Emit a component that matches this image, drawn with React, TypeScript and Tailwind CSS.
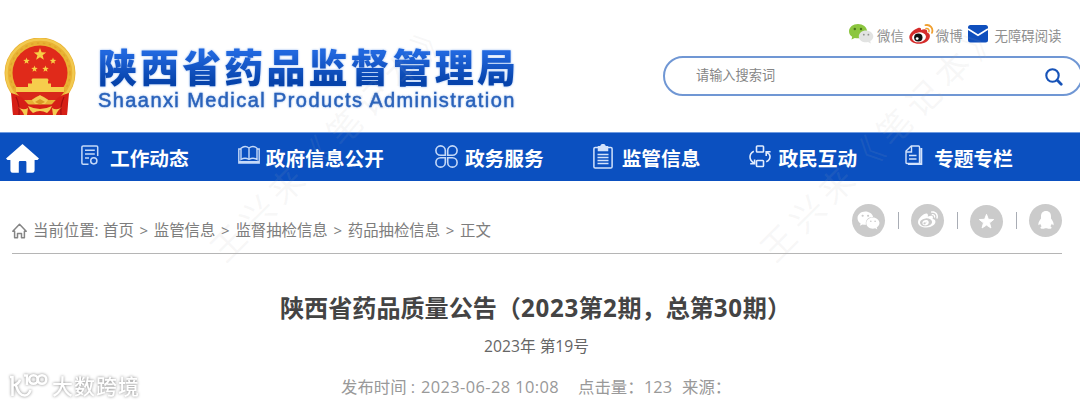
import type { ReactNode } from 'react'
import { FaWeixin, FaWeibo } from 'react-icons/fa'

interface NavItem {
  label: string
  className: string
  labelClass: string
  icon: ReactNode
}

const star = (cx: number, cy: number, r: number) =>
  Array.from({ length: 10 }, (_, i) => {
    const a = (Math.PI / 5) * i - Math.PI / 2
    const d = i % 2 ? r * 0.42 : r
    return `${(cx + d * Math.cos(a)).toFixed(2)},${(cy + d * Math.sin(a)).toFixed(2)}`
  }).join(' ')

// 国徽
function Emblem() {
  return (
    <svg className="w-[72px] h-[78px] shrink-0" viewBox="0 0 72 78">
      <path d="M8 52 L64 52 L63 77 H9 Z" fill="#d61f16" />
      <circle cx="36" cy="35" r="35.5" fill="#e9b233" />
      <circle cx="36" cy="35" r="33.5" fill="none" stroke="#f2c94f" strokeWidth="2.5" />
      <circle cx="36" cy="35" r="30" fill="none" stroke="#e0a42c" strokeWidth="1.5" strokeDasharray="2.5 3.5" />
      <circle cx="36" cy="35" r="27.5" fill="#e02a1a" />
      <polygon points={star(36, 16.5, 6.5)} fill="#f7cf45" />
      <polygon points={star(22.5, 23, 3.4)} fill="#f7cf45" />
      <polygon points={star(49, 23, 3.4)} fill="#f7cf45" />
      <polygon points={star(30.5, 31, 3.4)} fill="#f7cf45" />
      <polygon points={star(41.5, 31, 3.4)} fill="#f7cf45" />
      <path d="M27 42.5 L28.5 40.5 H43.5 L45 42.5 H44 V45.5 H47 V49 H60 V54 H12 V49 H24 V45.5 H28 V42.5 Z" fill="#f6cd4c" />
      <path d="M12 54 H60 Q57 59 53 62 H19 Q15 59 12 54 Z" fill="#d8281a" />
      <path d="M14 60 Q24 66 29 61 Q36 55 43 61 Q48 66 58 60 L50 70 H22 Z" fill="#e8b035" />
      <path d="M7 55 Q17 57 23 65 Q28 69 27 77 H9 Z M65 55 Q55 57 49 65 Q44 69 45 77 H63 Z" fill="#d61f16" />
      <path d="M12 59 Q16 67 15 77 M60 59 Q56 67 57 77" stroke="#a50f10" strokeWidth="1.2" fill="none" />
      <path d="M24 66.5 H48 Q46 73 42 77 H30 Q26 73 24 66.5 Z" fill="#d61f16" />
      <path d="M28 62 L36 57 L44 62 L41 66 H31 Z M24 68 Q36 74 48 68 L46 72 L43 75 Q36 71 29 75 L26 72 Z" fill="#f4cc52" />
      <path d="M31 64 L36 61 L41 64 L36 66.5 Z" fill="#d99a25" />
      <path d="M14 69 Q19 73 24 70 L23 77 H20 Q19 73 14 69 Z M58 69 Q53 73 48 70 L49 77 H52 Q53 73 58 69 Z" fill="#f4cc52" />
    </svg>
  )
}

function WechatIcon() {
  return (
    <svg className="w-[25px] h-5" viewBox="0 0 25 20">
      <path d="M9 0 C4 0 0 3.2 0 7.2 C0 9.5 1.2 11.4 3.2 12.7 L2.5 15.5 L5.8 13.9 C12 15.5 18.2 12 18 7 C17.8 3 14 0 9 0 Z" fill="#8cc63f" />
      <circle cx="5.8" cy="5" r="1.2" fill="#47731a" />
      <circle cx="12" cy="5" r="1.2" fill="#47731a" />
      <path d="M17 6.5 C12.8 6.5 9.8 9.2 9.8 12.4 C9.8 16.5 14.4 19 19 18 L21.8 19.4 L21.2 17 C23.2 15.8 24.3 14.2 24.3 12.4 C24.3 9.2 21 6.5 17 6.5 Z" fill="#e2e3e2" />
      <circle cx="14.8" cy="10.7" r="0.9" fill="#8e918c" />
      <circle cx="19.4" cy="10.7" r="0.9" fill="#8e918c" />
    </svg>
  )
}

function WeiboIcon() {
  return (
    <svg className="w-[25px] h-5" viewBox="0 0 25 20">
      <path d="M9 4 C11 3.2 12.4 4 12 6 C15 4.7 19 4.8 18.2 8.4 C20.5 9.2 21.2 10.8 20.8 13 C20 17.2 15.5 19.8 10 19.8 C4.5 19.8 .3 17 .3 13.2 C.3 9.5 5 5.5 9 4 Z" fill="#d52b2a" />
      <ellipse cx="10" cy="13.3" rx="7" ry="4.9" fill="#fff" transform="rotate(-8 10 13.3)" />
      <ellipse cx="9.3" cy="13.5" rx="4.2" ry="3.9" fill="#111" />
      <circle cx="8.2" cy="14.6" r="1.4" fill="#fff" />
      <path d="M16.5 1.2 C21 .2 24.6 4 23 8.8" stroke="#f0a030" strokeWidth="1.8" fill="none" strokeLinecap="round" />
      <path d="M17 4.6 C19.2 4.2 20.6 5.8 19.9 7.8" stroke="#f0a030" strokeWidth="1.5" fill="none" strokeLinecap="round" />
    </svg>
  )
}

function MailIcon() {
  return (
    <svg className="w-5 h-[18px]" viewBox="0 0 20 18">
      <rect width="20" height="17.5" rx="2.5" fill="#0f4fbd" />
      <path d="M0 4 L10 10.3 L20 4" stroke="#fff" strokeWidth="1.7" fill="none" />
    </svg>
  )
}

const navItems: NavItem[] = [
  {
    label: '工作动态',
    className: 'ml-[42px]',
    labelClass: 'ml-[11px]',
    icon: (
      <svg className="mb-1 w-[18px] h-[21px]" viewBox="0 0 18 21" fill="none" stroke="#c5d9f8" strokeWidth="1.5">
        <path d="M7.5 19.2 H2.2 Q.9 19.2 .9 18 V2 Q.9 .9 2.2 .9 H15.5 Q16.7 .9 16.7 2 V11" />
        <path d="M4 5.2 H13.8 M4 9 H13.8 M4 13 H8" />
        <circle cx="12.8" cy="15.8" r="3.1" />
      </svg>
    ),
  },
  {
    label: '政府信息公开',
    className: 'ml-[49px]',
    labelClass: 'ml-[6px]',
    icon: (
      <svg className="mb-1 w-[22px] h-[21px]" viewBox="0 0 22 21" fill="none" stroke="#c5d9f8" strokeWidth="1.4">
        <path d="M3 14.5 V3.2 Q7 -.2 11 3 Q15 -.2 19 3.2 V14.5 Q15 12 11 14.5 Q7 12 3 14.5 Z M11 3 V14.5" />
        <path d="M3 4 H.8 V18 H21.2 V4 H19 M1 16.6 H21" />
      </svg>
    ),
  },
  {
    label: '政务服务',
    className: 'ml-[51px]',
    labelClass: 'ml-[7px]',
    icon: (
      <svg className="mb-0.5 w-[23px] h-[23px]" viewBox="0 0 23 23" fill="none" stroke="#c5d9f8" strokeWidth="1.6">
        <path d="M10.3 10.3 H5.6 A4.7 4.7 0 1 1 10.3 5.6 Z M12.7 10.3 V5.6 A4.7 4.7 0 1 1 17.4 10.3 Z M10.3 12.7 V17.4 A4.7 4.7 0 1 1 5.6 12.7 Z M12.7 12.7 H17.4 A4.7 4.7 0 1 1 12.7 17.4 Z" />
      </svg>
    ),
  },
  {
    label: '监管信息',
    className: 'ml-[49px]',
    labelClass: 'ml-[9px]',
    icon: (
      <svg className="mb-0.5 w-5 h-[25px]" viewBox="0 0 20 25" fill="none" stroke="#d3e2fb" strokeWidth="1.5">
        <path d="M5 3.5 H2.2 Q.9 3.5 .9 4.8 V22.8 Q.9 24.1 2.2 24.1 H17.8 Q19.1 24.1 19.1 22.8 V4.8 Q19.1 3.5 17.8 3.5 H15" />
        <path d="M5.5 6.5 V2.8 H7.8 Q8 .6 10 .6 Q12 .6 12.2 2.8 H14.5 V6.5 Z" fill="#d3e2fb" />
        <path d="M4.5 10.5 H15.5 M4.5 13.5 H15.5 M4.5 16.5 H15.5 M4.5 19.5 H15.5" strokeWidth="1.3" />
      </svg>
    ),
  },
  {
    label: '政民互动',
    className: 'ml-[49px]',
    labelClass: 'ml-[7px]',
    icon: (
      <svg className="mb-0.5 w-[22px] h-[23px]" viewBox="0 0 22 23" fill="none" stroke="#e2ecfd" strokeWidth="1.6">
        <rect x="7.5" y="1" width="7" height="6" rx=".8" />
        <rect x="7.5" y="15.5" width="7" height="6" rx=".8" />
        <path d="M4.8 6.2 Q1 8 1 12 Q1 15.5 5.2 18.3 M1.2 18.8 H5.6 V14.6" />
        <path d="M17.2 16.8 Q21 15 21 11.4 Q21 9 17.6 7.4 M21.6 6.8 H17.2 V11" />
      </svg>
    ),
  },
  {
    label: '专题专栏',
    className: 'ml-[48px]',
    labelClass: 'ml-[11px]',
    icon: (
      <svg className="mb-1 w-[18px] h-5" viewBox="0 0 18 20" fill="none" stroke="#d3e2fb" strokeWidth="1.4">
        <path d="M1 17.5 V6 L6.3 1 H13.5 Q14.5 1 14.5 2 V17.5 Q14.5 18.5 13.5 18.5 H2 Q1 18.5 1 17.5 Z" />
        <path d="M1 7 H6.5 V1 M4 10.5 H11.5 M4 14 H11.5" />
        <path d="M16.3 3 V19 H3" strokeWidth="2" />
      </svg>
    ),
  },
]

const crumbs = ['首页', '监管信息', '监督抽检信息', '药品抽检信息', '正文']

function ShareDot({ className, children }: { className: string; children: ReactNode }) {
  return (
    <span className={`flex size-[33px] items-center justify-center rounded-full bg-[#cbcbcb] text-white ${className}`}>
      {children}
    </span>
  )
}

function Divider({ className }: { className: string }) {
  return <span className={`h-[17px] w-px bg-[#a9adb5] ${className}`} />
}

export default function App() {
  return (
    <div className="relative h-[406px] w-[1080px] overflow-hidden bg-white font-['Open_Sans','Noto_Sans_CJK_SC',sans-serif]">
      {/* 页头 */}
      <header className="flex h-[132px]">
        <div className="flex pt-[38px] pl-1">
          <Emblem />
          <div className="ml-[22px] pt-[5px]">
            <div className="h-[46px] bg-linear-to-b from-[#2168df] from-20% to-[#0643ab] to-85% bg-clip-text font-['Noto_Sans_CJK_SC',sans-serif] text-[39px] leading-[44px] font-black tracking-[3.1px] whitespace-nowrap text-transparent drop-shadow-[0_0_1px_#8fb5f0]">
              陕西省药品监督管理局
            </div>
            <div className="font-['Liberation_Sans',sans-serif] text-[20px] leading-[22px] tracking-[1.42px] whitespace-nowrap text-[#2a62ba] [-webkit-text-stroke:0.45px_#2a62ba] drop-shadow-[0_0_1px_#9fbfee]">
              Shaanxi Medical Products Administration
            </div>
          </div>
        </div>
        <div className="ml-auto w-[417px] shrink-0 pt-6">
          <div className="flex h-5 items-center pl-[186px] text-[13.4px] whitespace-nowrap text-[#8f8f8f]">
            <WechatIcon />
            <span className="mt-1 ml-[3px]">微信</span>
            <span className="ml-[5px]"><WeiboIcon /></span>
            <span className="mt-1 ml-[2px]">微博</span>
            <span className="ml-[5px]"><MailIcon /></span>
            <span className="mt-1 ml-[7px]">无障碍阅读</span>
          </div>
          <div className="mt-3 flex h-10 w-[420px] items-center rounded-full border-2 border-[#7097d4] pl-[31px]">
            <span className="text-[13.2px] text-[#858585]">请输入搜索词</span>
            <svg className="mt-0.5 ml-[270px] size-[18px]" viewBox="0 0 18 18" fill="none" stroke="#1753b8" strokeLinecap="round">
              <circle cx="7.5" cy="7.5" r="6.2" strokeWidth="2.1" />
              <path d="M12.3 12.3 L16.2 16.2" strokeWidth="2.8" />
            </svg>
          </div>
        </div>
      </header>

      {/* 主导航 */}
      <nav className="flex h-[49px] items-center border-t border-[#6f9be0] bg-[#0b50c0] text-white">
        <svg className="mt-0.5 ml-[6px] w-[33px] h-[29px]" viewBox="0 0 33 29" fill="#fff">
          <path d="M16.5 0 L33 14.5 L31.5 16 H28.6 V26.5 Q28.6 28.7 26.4 28.7 H20.4 V18.2 Q20.4 17 19.2 17 H14 Q12.8 17 12.8 18.2 V28.7 H6.6 Q4.4 28.7 4.4 26.5 V16 H1.5 L0 14.5 Z" />
        </svg>
        {navItems.map(item => (
          <a key={item.label} className={`flex items-center whitespace-nowrap ${item.className}`}>
            {item.icon}
            <span className={`mt-1 text-[19.7px] leading-6 font-bold ${item.labelClass}`}>{item.label}</span>
          </a>
        ))}
      </nav>

      {/* 当前位置 */}
      <div className="mx-3 flex h-[73px] w-[1050px] border-b border-[#b5b5b5]">
        <div className="flex items-center pt-[27px] text-[15.4px] whitespace-nowrap text-[#7d7d7d]">
          <svg className="w-[15px] h-4" viewBox="0 0 15 16" fill="none" stroke="#858585" strokeWidth="1.5" strokeLinejoin="round">
            <path d="M.8 8.2 L7.5 1.2 L14.2 8.2 H12.4 V14.8 H9.5 V10.5 H5.5 V14.8 H2.6 V8.2 Z" />
          </svg>
          <span className="ml-[6px] w-[70px]">当前位置:</span>
          {crumbs.map((c, i) => (
            <span key={c} className="flex items-center">
              {i > 0 && <span className="w-5 text-center text-[15px]">&gt;</span>}
              <span>{c}</span>
            </span>
          ))}
        </div>
        <div className="ml-auto flex h-[78px] items-center">
          <ShareDot className=""><FaWeixin className="size-[23px]" /></ShareDot>
          <Divider className="ml-[13px]" />
          <ShareDot className="ml-[12px]"><FaWeibo className="size-[20px]" /></ShareDot>
          <Divider className="ml-[13px]" />
          <ShareDot className="ml-[12px] mt-0.5">
            <svg className="size-[17px]" viewBox="0 0 18 18" fill="#fff" stroke="#fff" strokeLinejoin="round">
              <polygon points={star(9, 9.4, 8)} />
            </svg>
          </ShareDot>
          <Divider className="ml-[13px]" />
          <ShareDot className="ml-[12px]">
            <svg className="h-[18px] w-4" viewBox="0 0 16 18" fill="#fff">
              <path d="M8 0 C4.6 0 3 2.4 3 5.2 V7.4 C1.2 9.6 0 12.2 .5 14 Q.9 14.6 2.2 12.8 Q2.6 14.2 3.6 15.2 Q2 16 2.6 17.2 Q4 18.2 7.2 17.2 H8.8 Q12 18.2 13.4 17.2 Q14 16 12.4 15.2 Q13.4 14.2 13.8 12.8 Q15.1 14.6 15.5 14 C16 12.2 14.8 9.6 13 7.4 V5.2 C13 2.4 11.4 0 8 0 Z" />
            </svg>
          </ShareDot>
        </div>
      </div>

      {/* 公告标题 */}
      <main className="whitespace-nowrap">
        <h1 className="mt-[37px] pl-[280px] text-[24.1px] leading-[34px] font-bold text-[#444]">
          陕西省药品质量公告（<span className="tracking-[0.7px]">2023</span>第<span className="tracking-[0.7px]">2</span>期，总第<span className="tracking-[0.7px]">30</span>期）
        </h1>
        <p className="mt-[10px] pl-[484px] text-[15.7px] leading-[22px] text-[#666]">2023年 第19号</p>
        <p className="mt-[18px] flex pl-[341px] text-[16.4px] leading-6 text-[#999]">
          <span className="w-[80px]">发布时间 :</span>
          <span className="w-[157px] tracking-[0.4px]">2023-06-28 10:08</span>
          <span className="w-[66px]">点击量：</span>
          <span className="w-[38px]">123</span>
          <span>来源：</span>
        </p>
      </main>

      {/* 斜向水印 */}
      <span className="pointer-events-none absolute top-[143px] left-[178px] w-[340px] origin-[130px_20px] -rotate-45 text-[34px] leading-10 tracking-[7px] whitespace-nowrap text-[#b0b0b0]/10">
        王兴来《笔记本》
      </span>
      <span className="pointer-events-none absolute top-[143px] left-[728px] w-[340px] origin-[130px_20px] -rotate-45 text-[34px] leading-10 tracking-[7px] whitespace-nowrap text-[#b0b0b0]/10">
        王兴来《笔记本》
      </span>

      {/* 左下角标识 */}
      <div className="absolute top-[371px] left-[9px] flex items-center text-white drop-shadow-[0_0_1.5px_#888]">
        <svg className="w-[39px] h-[27px]" viewBox="0 0 39 27" fill="none" stroke="#fff" strokeWidth="2.6">
          <path d="M1 5 H3.5 V24 M11 7.5 Q10 12 4 13.5 M7 13.5 Q10 24 16 23.5 Q20 23 21.5 18" />
          <path d="M15 3.5 H18 V13" />
          <circle cx="24.5" cy="7.5" r="4.3" />
          <circle cx="33" cy="7.5" r="4.3" />
        </svg>
        <span className="ml-1 font-['Noto_Sans_CJK_SC',sans-serif] text-[21px] leading-7 font-medium tracking-[1px]">大数跨境</span>
      </div>
    </div>
  )
}
